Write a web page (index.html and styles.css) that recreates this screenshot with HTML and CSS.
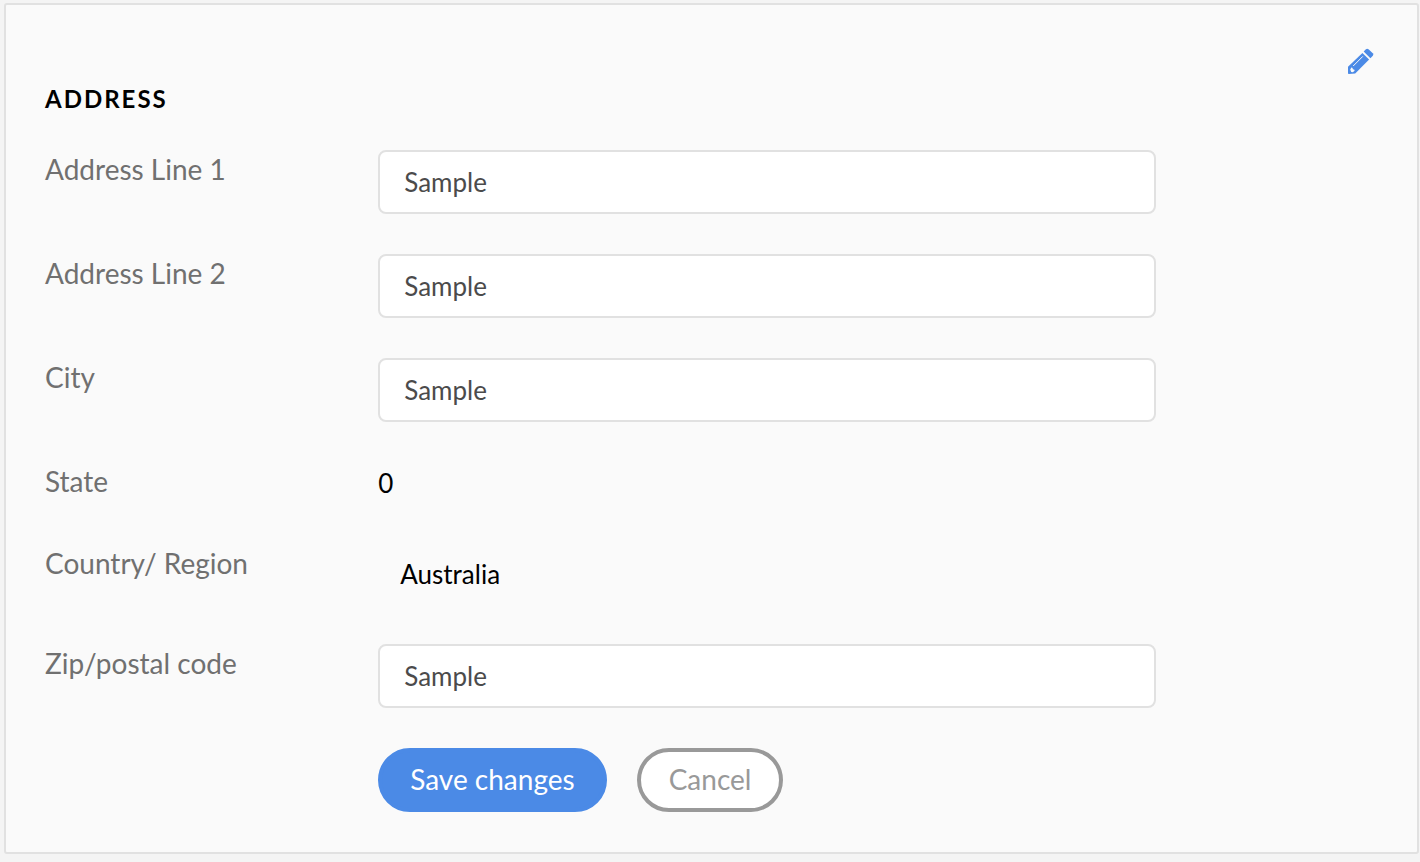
FILE: index.html
```
<!DOCTYPE html>
<html lang="en">
<head>
    <meta charset="utf-8">
    <meta name="viewport" content="width=device-width, initial-scale=1">
    <title>Address</title>
    <link rel="stylesheet" href="styles.css">
</head>
<body>
    <form class="card">
        <div class="toolbar">
            <button type="button" class="edit" aria-label="Edit address">
                <svg width="28" height="28" viewBox="0 0 28 28">
                    <path class="pencil" d="M2 18.8L16.4 4.9L23.1 11.5L9.2 25.6L2.8 26Q2 26 2 25.2Z"/>
                    <path class="pencil" d="M17.7 3.6L19.9 1.3Q21.2 0.1 22.5 1.3L26.8 5.3Q28 6.5 26.8 7.8L24.4 10.2Z"/>
                    <path class="shine" d="M7.2 18L16.8 8.4"/>
                    <path class="tip" d="M4.2 21.4L5.4 19.6Q6.2 19 6.6 20.2L6.9 21.2L8 21.5Q9 22 8.4 22.9L6.8 24.2L5.2 24Z"/>
                </svg>
            </button>
        </div>
        <h2>Address</h2>

        <div class="row">
            <label for="line1">Address Line 1</label>
            <input type="text" id="line1" value="Sample">
        </div>
        <div class="row">
            <label for="line2">Address Line 2</label>
            <input type="text" id="line2" value="Sample">
        </div>
        <div class="row">
            <label for="city">City</label>
            <input type="text" id="city" value="Sample">
        </div>
        <div class="row">
            <label for="state">State</label>
            <output class="value" id="state">0</output>
        </div>
        <div class="row">
            <label for="country">Country/ Region</label>
            <output class="value country" id="country">Australia</output>
        </div>
        <div class="row">
            <label for="zip">Zip/postal code</label>
            <input type="text" id="zip" value="Sample">
        </div>
        <div class="row">
            <div class="actions">
                <button type="submit" class="btn save">Save changes</button>
                <button type="button" class="btn cancel">Cancel</button>
            </div>
        </div>
    </form>
</body>
</html>
```
FILE: styles.css
```
* {
    box-sizing: border-box;
}

body {
    margin: 0;
    padding: 3px 1px 8px 4px;
    background: #f4f4f4;
    font-family: Lato, "Open Sans", sans-serif;
    font-size: 26px;
}

.card {
    padding: 39px 39px 40px;
    background: #fafafa;
    border: 2px solid #e1e1e1;
    border-radius: 3px;
}

.toolbar {
    display: flex;
    justify-content: flex-end;
}

.edit {
    display: flex;
    align-items: center;
    justify-content: center;
    width: 36px;
    height: 36px;
    padding: 0;
    background: none;
    border: none;
    cursor: pointer;
}

.pencil {
    fill: #4b8ae6;
}

.shine {
    fill: none;
    stroke: #fafafa;
    stroke-width: 1;
}

.tip {
    fill: #fafafa;
}

h2 {
    margin: 0 0 32px;
    font-size: 24px;
    line-height: 38px;
    letter-spacing: 2px;
    text-transform: uppercase;
    color: #000;
}

.row {
    display: grid;
    grid-template-columns: 3fr 7fr 2fr;
    align-items: start;
    margin-bottom: 40px;
}

.row:last-child {
    margin-bottom: 0;
}

label {
    font-size: 28px;
    line-height: 38px;
    color: #707070;
}

input {
    width: 100%;
    height: 64px;
    padding: 0 24px;
    font-family: inherit;
    font-size: 26px;
    color: #4b4b4b;
    background: #fff;
    border: 2px solid #e1e1e1;
    border-radius: 8px;
}

.value {
    line-height: 42px;
    color: #000;
}

.country {
    padding: 0 22px;
    line-height: 60px;
}

.actions {
    display: flex;
    grid-column: 2;
    gap: 30px;
}

.btn {
    height: 64px;
    padding: 0 28px 2px;
    font-family: inherit;
    font-size: 28px;
    border: 4px solid;
    border-radius: 32px;
    cursor: pointer;
}

.save {
    color: #fff;
    background: #4b8ae6;
    border-color: #4b8ae6;
}

.cancel {
    color: #999;
    background: #fff;
    border-color: #999;
}
```
